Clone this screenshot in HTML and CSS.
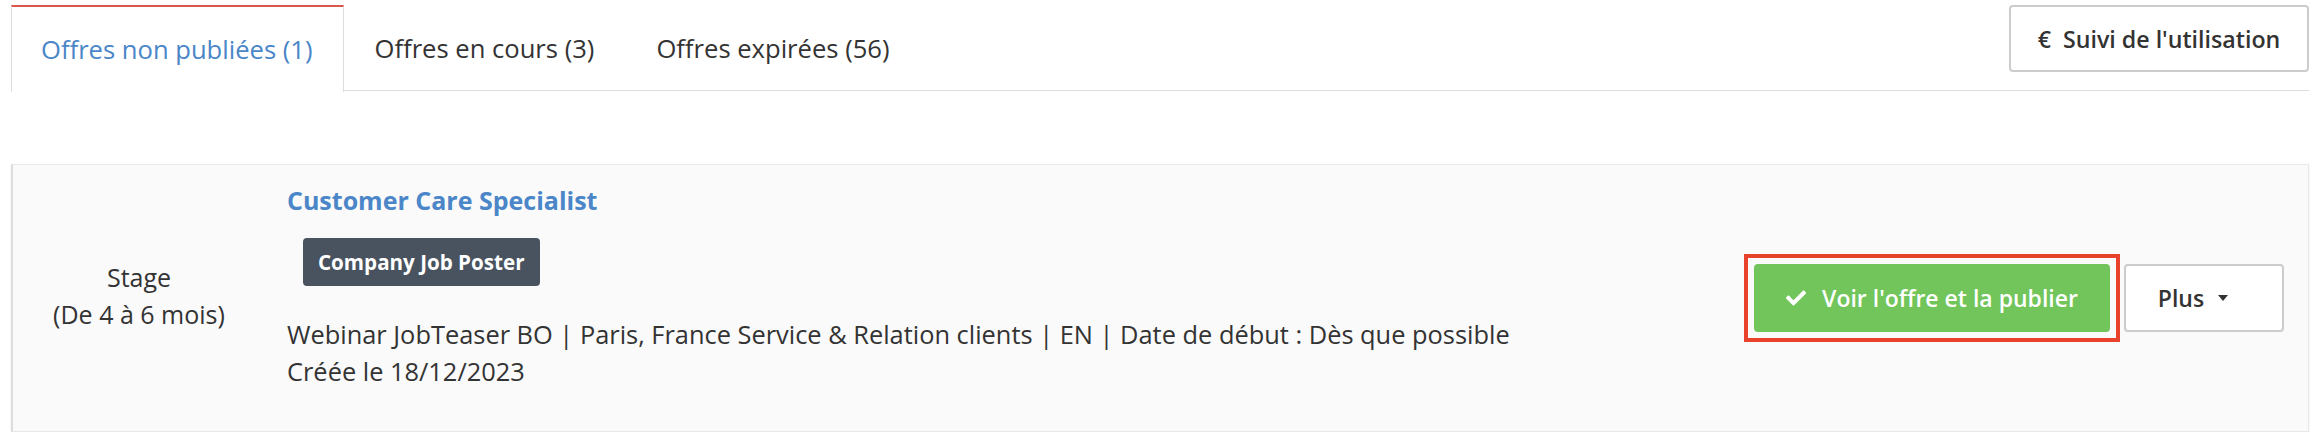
FILE: index.html
```html
<!DOCTYPE html>
<html lang="fr">
<head>
<meta charset="utf-8">
<title>Offres</title>
<link rel="stylesheet" href="styles.css">
</head>
<body>
<div class="page">
  <div class="tabbar">
    <ul class="tabs">
      <li class="tab active">Offres non publiées (1)</li>
      <li class="tab">Offres en cours (3)</li>
      <li class="tab">Offres expirées (56)</li>
    </ul>
    <button class="usage-btn"><span class="euro">€</span> Suivi de l'utilisation</button>
  </div>

  <div class="card">
    <div class="type-col">
      <div>Stage</div>
      <div>(De 4 à 6 mois)</div>
    </div>
    <div class="info-col">
      <a class="title">Customer Care Specialist</a>
      <div class="badge-row"><span class="badge">Company Job Poster</span></div>
      <div class="desc">Webinar JobTeaser BO | Paris, France Service &amp; Relation clients | EN | Date de début : Dès que possible</div>
      <div class="desc">Créée le 18/12/2023</div>
    </div>
    <div class="actions">
      <div class="highlight">
        <button class="publish-btn">
          <svg class="check" viewBox="0 0 512 512" width="20" height="20"><path fill="#fff" d="M173.9 439.4L7.5 273c-10-10-10-26.2 0-36.2l36.2-36.2c10-10 26.2-10 36.2 0L192 312.7 432.1 72.6c10-10 26.2-10 36.2 0l36.2 36.2c10 10 10 26.2 0 36.2L210.1 439.4c-10 10-26.2 10-36.2 0z"/></svg>
          <span>Voir l'offre et la publier</span>
        </button>
      </div>
      <button class="more-btn">Plus <span class="caret"></span></button>
    </div>
  </div>
</div>
</body>
</html>
```

FILE: styles.css
```css
* { box-sizing: border-box; }
html, body { margin: 0; padding: 0; background: #fff; }
body {
  font-family: "Open Sans", "Noto Sans", sans-serif;
  color: #333;
  font-size: 25px;
}
.page {
  padding: 5px 5px 0 11px;
}
.tabbar {
  display: flex;
  justify-content: space-between;
  align-items: flex-start;
  border-bottom: 1px solid #ddd;
  height: 86px;
}
.tabs {
  display: flex;
  list-style: none;
  margin: 0;
  padding: 0;
  height: 86px;
}
.tab {
  padding: 0 30px 0 30px;
  height: 86px;
  display: flex;
  align-items: center;
  color: #333;
  font-size: 25.6px;
  border: 1px solid transparent;
  border-top-width: 2px;
}
.tab.active {
  color: #4a86c8;
  background: #fff;
  border-color: #ddd;
  border-top-color: #d9574b;
  border-bottom: none;
  height: 87px;
  padding-left: 29px;
}
.usage-btn {
  font-family: inherit;
  font-size: 23.2px;
  font-weight: 600;
  color: #333;
  background: #fff;
  border: 2px solid #ccc;
  border-radius: 4px;
  width: 300px;
  height: 67px;
  padding: 0;
  margin-top: 0;
}
.euro { margin-right: 6px; }

.card {
  margin-top: 73px;
  display: flex;
  align-items: center;
  background: #fafafa;
  border: 1px solid #e8e8e8;
  border-left: 2px solid #ddd;
  box-shadow: 0 1px 2px rgba(0,0,0,0.08);
  height: 268px;
}
.type-col {
  width: 252px;
  text-align: center;
  font-size: 25px;
  line-height: 37px;
  margin-top: -4px;
}
.info-col {
  flex: 1;
  align-self: flex-start;
  padding: 17px 0 0 22px;
}
.title {
  display: block;
  color: #4a86c8;
  font-weight: 700;
  font-size: 25px;
  line-height: 37px;
}
.badge-row {
  padding: 19px 0 30px 16px;
}
.badge {
  display: inline-block;
  background: #48535f;
  color: #fff;
  font-weight: 700;
  font-size: 20.6px;
  height: 48px;
  line-height: 48px;
  padding: 0 15px;
  border-radius: 4px;
}
.desc {
  font-size: 25.4px;
  line-height: 37px;
}
.actions {
  display: flex;
  align-items: center;
  gap: 4px;
  padding-right: 24px;
}
.highlight {
  border: 4px solid #e8412c;
  padding: 6px;
}
.publish-btn {
  display: flex;
  align-items: center;
  justify-content: center;
  gap: 16px;
  width: 356px;
  height: 68px;
  background: #71c55b;
  color: #fff;
  border: none;
  border-radius: 4px;
  font-family: inherit;
  font-size: 23px;
  font-weight: 600;
  padding: 0;
}
.check { display: block; }
.more-btn {
  width: 160px;
  height: 68px;
  background: #fff;
  border: 2px solid #ccc;
  border-radius: 4px;
  font-family: inherit;
  font-size: 23px;
  font-weight: 600;
  color: #333;
  display: flex;
  align-items: center;
  justify-content: center;
  gap: 14px;
  padding: 0 22px 0 0;
}
.caret {
  display: inline-block;
  width: 0;
  height: 0;
  border-left: 5px solid transparent;
  border-right: 5px solid transparent;
  border-top: 6px solid #333;
}
```
